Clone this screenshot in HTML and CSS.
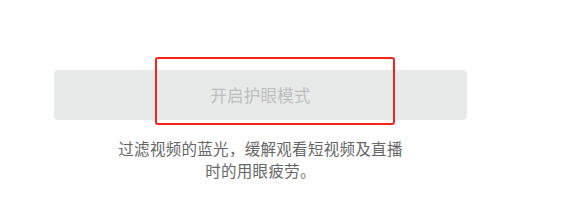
FILE: index.html
```html
<!DOCTYPE html>
<html lang="zh-CN">
<head>
  <meta charset="UTF-8">
  <meta name="viewport" content="width=device-width, initial-scale=1.0">
  <title>护眼模式</title>
  <link rel="stylesheet" href="styles.css">
</head>
<body>
  <div class="eye-care">
    <div class="button-wrap">
      <button class="eye-button">开启护眼模式</button>
      <div class="highlight-box"></div>
    </div>
    <p class="eye-desc">过滤视频的蓝光，缓解观看短视频及直播时的用眼疲劳。</p>
  </div>
</body>
</html>
```

FILE: styles.css
```css
body {
  margin: 0;
  padding: 0;
  background-color: #ffffff;
  font-family: "Noto Sans CJK SC", "Noto Sans", sans-serif;
}

.eye-care {
  width: 521px;
  padding: 70px 0 0 0;
  display: flex;
  flex-direction: column;
  align-items: center;
}

.button-wrap {
  position: relative;
  width: 413px;
  margin-left: 54px;
  align-self: flex-start;
}

.eye-button {
  display: block;
  width: 413px;
  height: 50px;
  border: none;
  border-radius: 4px;
  background-color: #e8e9e9;
  color: #bdbebe;
  font-family: "Noto Sans CJK SC", "Noto Sans", sans-serif;
  font-size: 16.5px;
  letter-spacing: 0.2px;
  padding: 0;
}

/* annotation frame over the button */
.highlight-box {
  position: absolute;
  left: 101px;
  top: -13px;
  width: 236px;
  height: 64px;
  border: 2px solid #f5231b;
  border-radius: 3px;
}

.eye-desc {
  width: 295px;
  margin: 17px 0 0 0;
  text-align: center;
  font-size: 15.5px;
  letter-spacing: 0.3px;
  line-height: 22px;
  color: #666666;
}
```
